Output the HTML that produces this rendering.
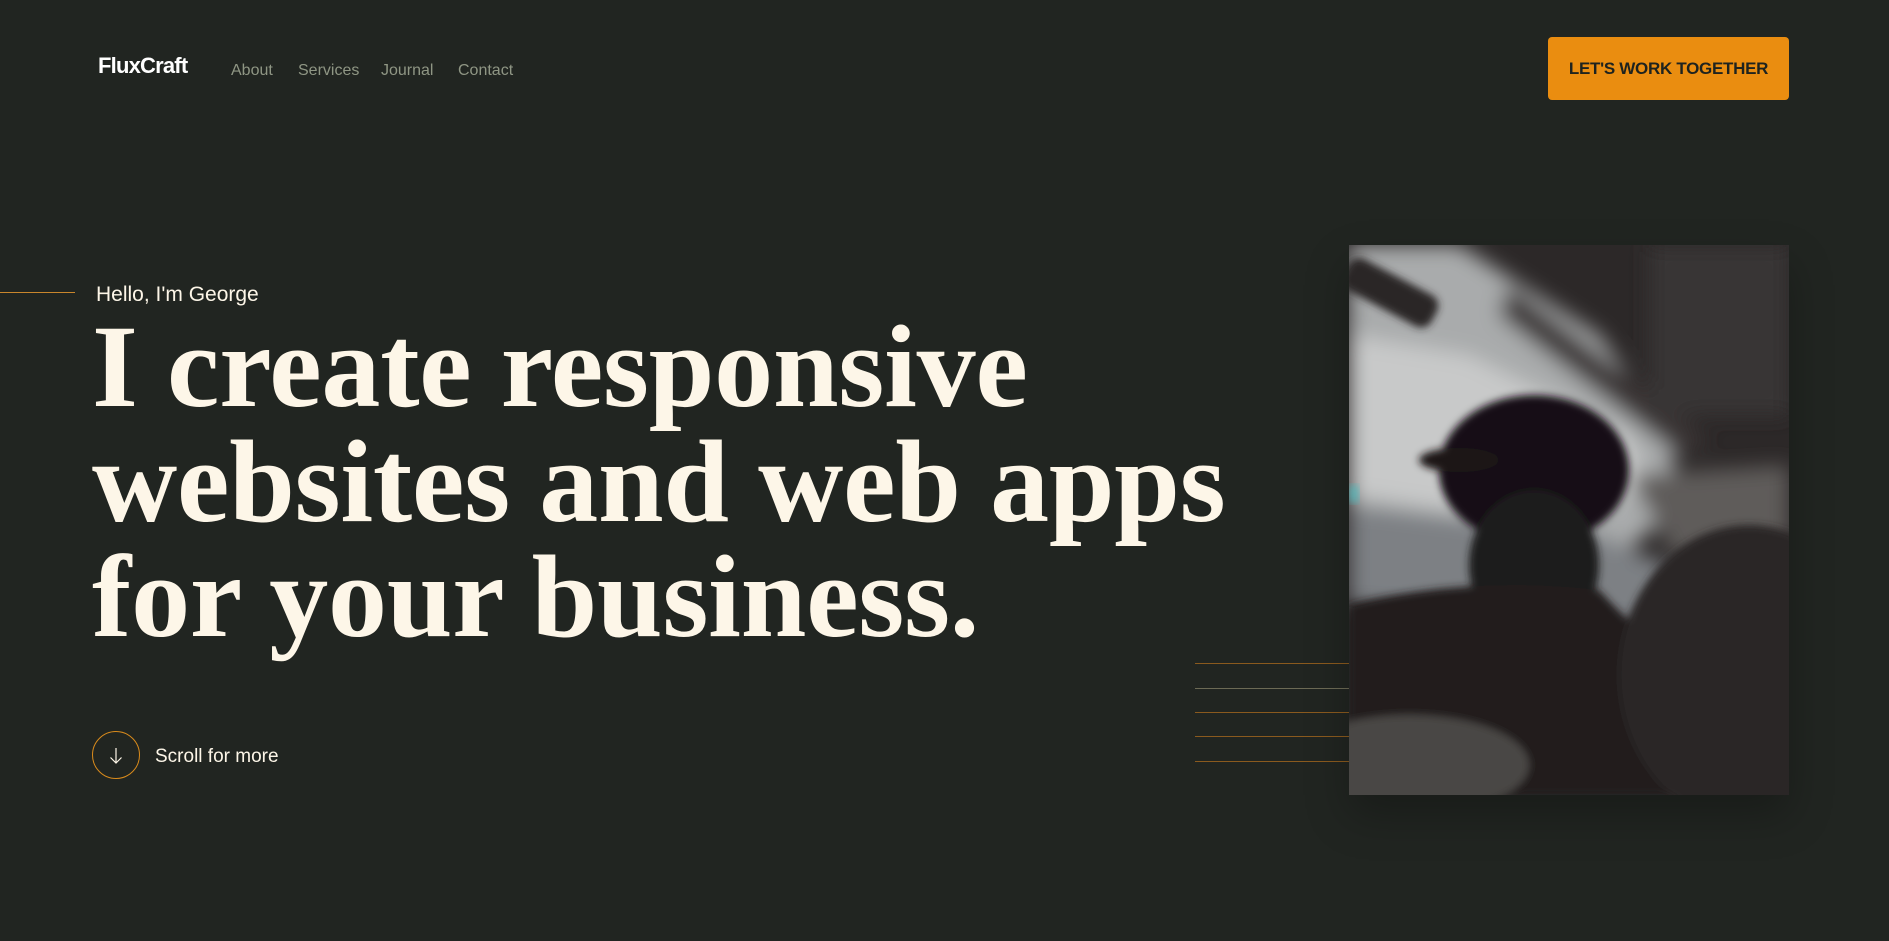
<!DOCTYPE html>
<html><head><meta charset="utf-8">
<style>
*{margin:0;padding:0;box-sizing:border-box}
html,body{width:1889px;height:941px;overflow:hidden;background:#212521;font-family:"Liberation Sans",sans-serif}
.logo{position:absolute;left:98px;top:53px;font-size:22px;font-weight:bold;color:#fff;letter-spacing:-0.8px}
.nav{position:absolute;top:62px;font-size:16px;color:#8f9684}
.btn{position:absolute;left:1548px;top:37px;width:241px;height:63px;background:#ea8d10;border-radius:4px;color:#1e231f;font-size:17px;font-weight:bold;display:flex;align-items:center;justify-content:center;letter-spacing:-0.3px}
.hl{position:absolute;left:0;top:292px;width:75px;height:1px;background:#c9862c}
.hello{position:absolute;left:96px;top:283px;font-size:21px;color:#fdf6e8}
h1{position:absolute;left:92px;top:309px;font-family:"Liberation Serif",serif;font-weight:bold;font-size:118px;line-height:115px;color:#fdf6e8;letter-spacing:-0.2px;white-space:nowrap}
.circ{position:absolute;left:92px;top:731px;width:48px;height:48px;border:1px solid #d98b1c;border-radius:50%}
.scroll{position:absolute;left:155px;top:746px;font-size:19px;color:#fdf6e8}
.ln{position:absolute;left:1195px;width:154px;height:1px;background:#8a5a1e}
.img{position:absolute;left:1349px;top:245px;width:440px;height:550px;overflow:hidden;box-shadow:0 20px 40px rgba(0,0,0,.25)}
</style></head><body>
<div class="logo">FluxCraft</div>
<div class="nav" style="left:231px">About</div>
<div class="nav" style="left:298px">Services</div>
<div class="nav" style="left:381px">Journal</div>
<div class="nav" style="left:458px">Contact</div>
<div class="btn">LET'S WORK TOGETHER</div>
<div class="hl"></div>
<div class="hello">Hello, I'm George</div>
<h1>I create responsive<br>websites and web apps<br>for your business.</h1>
<div class="circ"><svg width="48" height="48" viewBox="0 0 48 48"><path d="M23 16v15M17.5 25.5 23 31l5.5-5.5" fill="none" stroke="#fdf6e8" stroke-width="1.2"/></svg></div>
<div class="scroll">Scroll for more</div>
<div class="ln" style="top:663px"></div>
<div class="ln" style="top:688px;background:#6c6a55"></div>
<div class="ln" style="top:712px"></div>
<div class="ln" style="top:736px"></div>
<div class="ln" style="top:761px"></div>
<div class="img"><svg width="440" height="550" viewBox="0 0 440 550">
<defs><filter id="b" x="-20%" y="-20%" width="140%" height="140%"><feGaussianBlur stdDeviation="10"/></filter>
<filter id="b2"><feGaussianBlur stdDeviation="4"/></filter></defs>
<rect width="440" height="550" fill="#2c2828"/>
<g filter="url(#b)">
<polygon points="0,0 110,0 250,90 320,190 330,260 250,330 0,340" fill="#a9abac"/>
<polygon points="0,90 120,110 280,190 300,240 200,280 0,250" fill="#c8c9c9"/>
<polygon points="0,260 250,290 340,330 300,380 0,360" fill="#7d8084"/>
<polygon points="280,230 440,220 440,330 330,320" fill="#5f5c5a"/>
<polygon points="160,40 330,170 360,200 330,210 150,70" fill="#3a3636"/>
<rect x="300" y="0" width="140" height="170" fill="#393535"/>
</g>
<g filter="url(#b2)">
<rect x="-10" y="30" width="100" height="35" rx="12" transform="rotate(28 40 50)" fill="#2a2627"/>
<ellipse cx="185" cy="225" rx="95" ry="75" fill="#141112"/>
<ellipse cx="110" cy="215" rx="40" ry="12" fill="#1a1617"/>
<ellipse cx="185" cy="320" rx="65" ry="75" fill="#1e1a1b"/>
<path d="M0 360 Q120 330 250 345 L320 420 L330 550 L0 550Z" fill="#211c1c"/>
<ellipse cx="400" cy="430" rx="130" ry="150" fill="#2a2727"/>
<ellipse cx="60" cy="520" rx="120" ry="50" fill="#4a4644"/>
</g>
<rect x="0" y="240" width="10" height="18" fill="#3ec4c8" opacity=".6" filter="url(#b2)"/>
</svg></div>
</body></html>
